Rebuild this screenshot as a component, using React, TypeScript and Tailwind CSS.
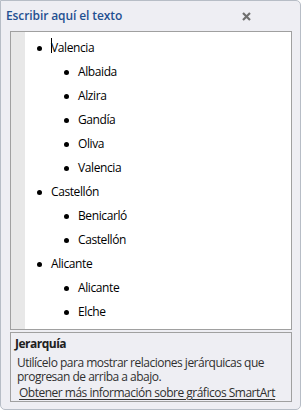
const items: { level: 1 | 2; text: string; cursor?: boolean }[] = [
  { level: 1, text: "Valencia", cursor: true },
  { level: 2, text: "Albaida" },
  { level: 2, text: "Alzira" },
  { level: 2, text: "Gandía" },
  { level: 2, text: "Oliva" },
  { level: 2, text: "Valencia" },
  { level: 1, text: "Castellón" },
  { level: 2, text: "Benicarló" },
  { level: 2, text: "Castellón" },
  { level: 1, text: "Alicante" },
  { level: 2, text: "Alicante" },
  { level: 2, text: "Elche" },
];

export default function App() {
  return (
    <div className="w-[302px] h-[412px] bg-white font-['Open_Sans',sans-serif]">
      <div className="w-[301px] h-[410px] flex flex-col border border-[#b7bdc6] rounded-tr-[5px] rounded-b-[5px] bg-[#eeeef3] pl-[9px] pr-[8px]">
        {/* title */}
        <div className="h-[30px] flex items-center justify-between shrink-0">
          <span className="-ml-[4px] text-[12px] font-semibold text-[#1f5091] tracking-[-0.1px]">
            Escribir aquí el texto
          </span>
          <svg width="9" height="9" viewBox="0 0 9 9" className="mr-[41px] mt-[1px]">
            <path d="M1 1 L8 8 M8 1 L1 8" stroke="#6f6f6f" strokeWidth="2.2" />
          </svg>
        </div>

        {/* text pane */}
        <div className="h-[299px] flex border border-[#a0a0a0] bg-white shrink-0">
          <div className="w-[14px] bg-[#e8e8e8]" />
          <ul className="flex-1 pt-[4px] text-[12px] tracking-[-0.4px] text-black">
            {items.map((it, i) => (
              <li
                key={i}
                className={`h-[24px] flex items-center ${it.level === 1 ? "pl-[12px]" : "pl-[39px]"}`}
              >
                <span className="w-[5px] h-[5px] rounded-full bg-black" />
                <span className="relative ml-[9px]">
                  {it.cursor && <span className="absolute left-0 -top-[1px] w-[1px] h-[15px] bg-black" />}
                  {it.text}
                </span>
              </li>
            ))}
          </ul>
        </div>

        {/* description pane */}
        <div className="mt-[2px] h-[70px] border border-[#a0a0a0] px-[4px] pt-[4px] text-[12px] tracking-[-0.5px] leading-[14px] shrink-0">
          <div className="font-bold text-[#202020]">Jerarquía</div>
          <div className="mt-[5px] pl-[2px] text-[#303030]">
            Utilícelo para mostrar relaciones jerárquicas que progresan de arriba a abajo.
          </div>
          <div className="mt-[2px] pl-[4px] leading-[13px] text-[#303030] underline underline-offset-2">
            Obtener más información sobre gráficos SmartArt
          </div>
        </div>
      </div>
    </div>
  );
}
